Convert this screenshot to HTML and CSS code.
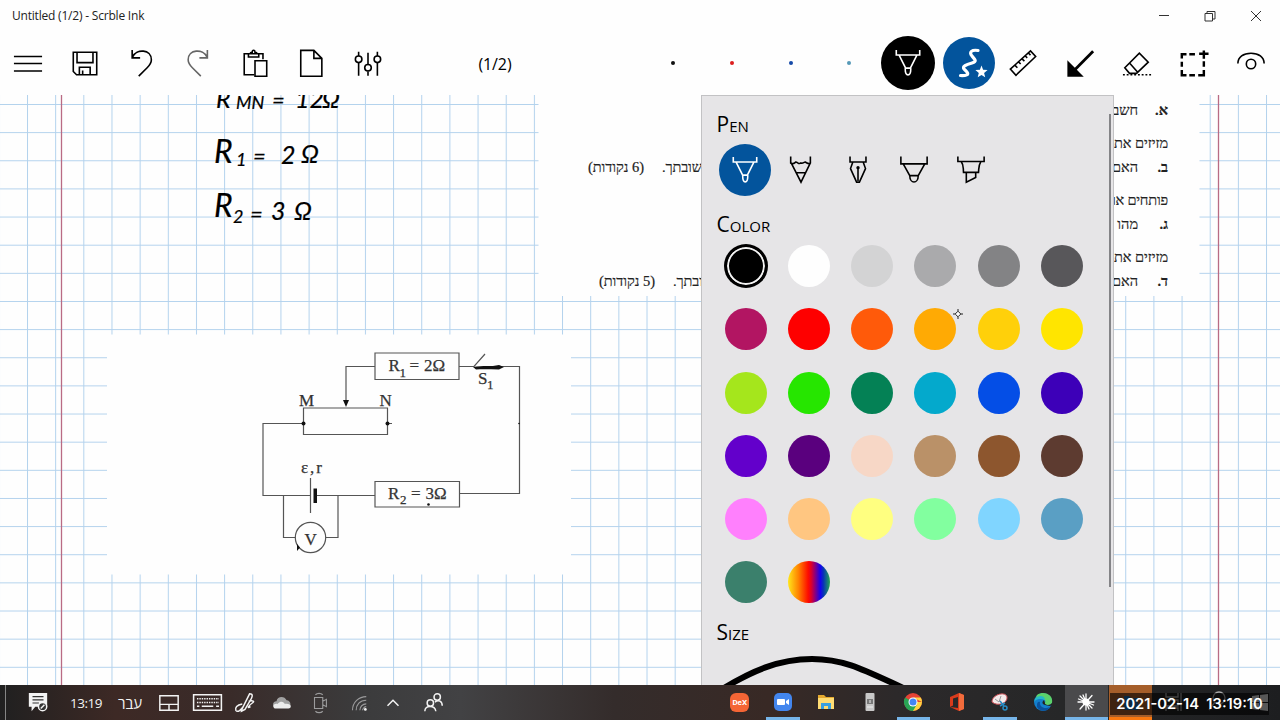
FILE: index.html
```html
<!DOCTYPE html>
<html lang="en">
<head>
<meta charset="utf-8">
<title>Untitled (1/2) - Scrble Ink</title>
<link rel="stylesheet" href="styles.css">
</head>
<body>
<div class="app">
  <header class="titlebar">
    <span class="title">Untitled (1/2) - Scrble Ink</span>
    <div class="winbtns">
      <svg viewBox="0 0 12 12"><path d="M1 5.5h10"/></svg>
      <svg viewBox="0 0 12 12"><path d="M1 3.500h7.500v7.500h-7.500zM3 3.500v-2h8v7.500h-2.500"/></svg>
      <svg viewBox="0 0 12 12"><path d="M1 1l10 10M11 1l-10 10"/></svg>
    </div>
  </header>

  <nav class="toolbar">
    <div class="tools-left">
      <svg viewBox="0 0 32 32"><path d="M1 8h30M1 15.500h30M1 23.500h30"/></svg>
      <svg viewBox="0 0 32 32"><path d="M3.500 3.500h25v24h-21.500l-3.500-3.500zM7.500 4v10.500h17v-10.500M10 27v-7.500h11.500v7.500M13.500 23v4"/></svg>
      <svg viewBox="0 0 32 32"><path d="M5.500 1v8.500h8.500M6 8.500C10-.5 26 0 26 11.500c0 4-2 6-4.500 8.500L12.500 29"/></svg>
      <svg class="muted" viewBox="0 0 32 32"><path d="M26 1v8.500h-8.500M25.500 8.500C21.500-.5 5.500 0 5.500 11.500c0 4 2 6 4.500 8.500L19 29"/></svg>
      <svg viewBox="0 0 32 32"><path d="M15 27.500H4.500v-22.500h20V11M9 5v3.500h11v-3.500M11 5c0-1.500 1-1.500 2-1.500 0-3 3-3 3 0 1 0 2 0 2 1.500M16 12.500h12.500v16.500h-12.500z"/></svg>
      <svg viewBox="0 0 32 32"><path d="M4 1.500h14l8.500 8.500v19h-22.500zM18 1.500v8.500h8.500"/></svg>
      <svg viewBox="0 0 32 32"><path d="M6 3v4.500M6 14.500v14M16 4v12M16 24v4.500M26 3v4.500M26 14.500v14"/><circle cx="6" cy="11" r="3.500"/><circle cx="16" cy="20" r="3.500"/><circle cx="26" cy="11" r="3.500"/></svg>
    </div>
    <span class="pagecount">(1/2)</span>
    <div class="quickpens"><i class="qp black"></i><i class="qp red"></i><i class="qp blue"></i><i class="qp sky"></i></div>
    <div class="active-tools">
      <div class="round ink"><svg viewBox="0 0 32 32"><path d="M3.500 2v5.500h25V2M6.500 7.500l7 14h5l7-14M13 21.500c0 9.500 6 9.500 6 0"/></svg></div>
      <div class="round shape"><svg viewBox="0 0 32 32"><path class="thick" d="M25 3.500C19 2.500 15.500 5 19 9S24 14.500 19 16 8 19.500 11.500 22.500 18 29 7.500 28.500"/><path class="star" d="M28.500 18.500l1.600 4.200 4.500.3-3.500 2.900 1.100 4.400-3.700-2.400-3.800 2.400 1.100-4.400-3.400-2.900 4.500-.3z"/></svg></div>
    </div>
    <div class="tools-right">
      <svg viewBox="0 0 32 32"><path d="M2.500 21.500L24 2l5.500 6L8.500 28zM7.500 17.500l2.500 2.500M11.500 14l2 2M15 10.500l2.500 2.500M18.500 7.500l2 2M22 4.500l2 2"/></svg>
      <svg viewBox="0 0 32 32"><path class="arrow" d="M30 2.500L11 21.500"/><path class="solid" d="M2.500 12v17.500h17.500z"/></svg>
      <svg viewBox="0 0 32 32"><path d="M3 20L18.500 4.500l9.500 9.500-12.500 12H8zM8.500 15.500l8.500 9.500"/><path class="dots" d="M1 27.500h30"/></svg>
      <svg viewBox="0 0 32 32"><path class="heavy" d="M3 10V5.500h5M11 5.500h6M3 13.500v5.500M3 22.500v5.500h5M11 28h6M20.500 28h6v-5.500M26.500 13v6M21.500 5h10M26.500 1.500v9"/></svg>
      <svg viewBox="0 0 32 32"><path d="M2 15.500c0-7 6-11 14-11s14 4 14 11"/><circle cx="16" cy="16" r="5"/></svg>
    </div>
  </nav>

  <main class="workspace">
    <svg class="canvas" viewBox="0 95 1280 590">
      <defs>
        <pattern id="grid" x="27" y="104" width="28.160" height="28.140" patternUnits="userSpaceOnUse"><path class="gridline" d="M.5 0V28.140M0 .5H28.160"/></pattern>
      </defs>
      <rect x="0" y="95" width="1280" height="590" fill="url(#grid)"/>
      <path class="margin" d="M61.500 95v590M1218.500 95v590"/>
      <rect class="paper" x="538.500" y="95" width="661" height="201"/>
      <rect class="paper" x="107" y="334.500" width="464" height="240"/>

      <g class="hand">
        <text x="216" y="107.500">R</text><text class="sub" x="236" y="109">MN</text><text class="eq" x="272" y="107.500">=</text><text x="295" y="107.500">12</text><text x="322" y="107.500">Ω</text>
        <text class="big" x="214" y="163">R</text><text class="sub" x="236" y="166">1</text><text class="eq" x="253" y="164">=</text><text x="281" y="164">2</text><text class="omega" x="301" y="163">Ω</text>
        <text class="big" x="214" y="217">R</text><text class="sub" x="233" y="223">2</text><text class="eq" x="250" y="222">=</text><text x="271" y="220">3</text><text class="omega" x="294" y="220">Ω</text>
      </g>

      <g class="hebrew">
        <text class="b" x="1168" y="114.500">א.</text><text x="1138" y="114.500">חשב</text>
        <text x="1168" y="148" textLength="54">מזיזים את</text>
        <text class="b" x="1168" y="171.500">ב.</text><text x="1138" y="171.500">האם</text>
        <text x="1168" y="205" textLength="56">פותחים או</text>
        <text class="b" x="1168" y="228.500">ג.</text><text x="1138" y="228.500">מהו</text>
        <text x="1168" y="262" textLength="54">מזיזים את</text>
        <text class="b" x="1168" y="286">ד.</text><text x="1138" y="286">האם</text>
        <text x="702" y="171.500" textLength="40">שובתך.</text><text x="644" y="171.500" textLength="56">(6 נקודות)</text>
        <text x="703" y="286" textLength="30">ובתך.</text><text x="655" y="286" textLength="56">(5 נקודות)</text>
      </g>

      <g class="circuit">
        <path d="M375 353h84v26.500h-84zM375 366.500h-29V401M303.500 408h84v26.500h-84zM303 423.500h-40V495.500H310M316 495.500H375M375 481.500h84.500v25.500H375zM459 366.500h15l11-12.500M500 366.500h19.500V493.500H459.500M310.500 478v35M283.500 496v41.500h12M338 496v41.500h-12.500M387 423.500h5"/>
        <circle cx="310.500" cy="537.500" r="15.200"/>
        <path class="fill" d="M343 400h6l-3 7zM313.500 488.500h3.500v14.500h-3.500zM297 544v7l3-3.500zM473 367c10-2 18 0 26-2l5 2-5 2.500c-8 0-15-.5-23 0z"/>
        <circle class="fill" cx="303.500" cy="423.500" r="2"/><circle class="fill" cx="387.500" cy="423.500" r="2"/><circle class="fill" cx="428.500" cy="504.500" r="1.300"/><circle class="fill" cx="519" cy="423.500" r=".8"/>
      </g>
      <g class="labels">
        <text x="388.500" y="371">R</text><text class="small" x="399.500" y="376.500">1</text><text x="409.500" y="371">=</text><text x="424" y="371">2Ω</text>
        <text x="388" y="498.500">R</text><text class="small" x="400" y="504">2</text><text x="411" y="498.500">=</text><text x="425.500" y="498.500">3Ω</text>
        <text x="299" y="405.500">M</text><text x="379.500" y="405.500">N</text><text x="301" y="472.500" textLength="21">ε,r</text>
        <text x="304.500" y="545">V</text><text x="478" y="383.500">S</text><text class="small" x="487" y="388.500">1</text>
      </g>
    </svg>

    <aside class="panel">
      <h2>Pen</h2>
      <div class="nibs">
        <div class="nib selected"><svg viewBox="0 0 32 32"><path d="M3.500 2v5.500h25V2M6.500 7.500l7 14h5l7-14M13.500 21.500c0 9.500 5.500 9.500 5.500 0"/></svg></div>
        <div class="nib"><svg viewBox="0 0 32 32"><path d="M5 1.500v7c3 2 4 0 5.500-1 2 0 3 3 5.500 1 2 1 3-1 4.500-1 2 1 4 3 5.500 1V1.500M5.500 8.500l10.500 20.500L26 8.500M11 19h10"/></svg></div>
        <div class="nib"><svg viewBox="0 0 32 32"><path d="M7.500 1.500v6h17v-6M10.500 7.500L8 14.500 14.500 29h3l6.500-14.500L21.500 7.500M16 13v15"/><circle class="solid" cx="16" cy="13.500" r="1.800"/></svg></div>
        <div class="nib"><svg viewBox="0 0 32 32"><path d="M2 1.500v8h28v-8M4.500 9.500l7 12.500h9l7-12.500M11.500 22c0 9 9 9 9 0"/></svg></div>
        <div class="nib"><svg viewBox="0 0 32 32"><path d="M2 1.500v5.500h28V1.500M5.500 7c3 4 2 6 2.500 11.500h16c.5-5.500 0-7.500 2.500-11.500M11 18.500v10.500l10-5V18.500"/></svg></div>
      </div>
      <h2>Color</h2>
      <div class="swatches">
        <i class="c01"></i><i class="c02"></i><i class="c03"></i><i class="c04"></i><i class="c05"></i><i class="c06"></i>
        <i class="c07"></i><i class="c08"></i><i class="c09"></i><i class="c10"></i><i class="c11"></i><i class="c12"></i>
        <i class="c13"></i><i class="c14"></i><i class="c15"></i><i class="c16"></i><i class="c17"></i><i class="c18"></i>
        <i class="c19"></i><i class="c20"></i><i class="c21"></i><i class="c22"></i><i class="c23"></i><i class="c24"></i>
        <i class="c25"></i><i class="c26"></i><i class="c27"></i><i class="c28"></i><i class="c29"></i><i class="c30"></i>
        <i class="c31"></i><i class="c32"></i>
      </div>
      <h2>Size</h2>
      <svg class="stroke-preview" viewBox="0 0 411 38"><path d="M14 46C50 23 78 12 110 12S160 22 212 46"/></svg>
      <div class="scrollbar"></div>
      <svg class="cursor" viewBox="0 0 10 10"><path d="M5 0v2M5 8v2M0 5h2M8 5h2M5 2.200L7.800 5 5 7.800 2.200 5z"/></svg>
    </aside>
  </main>

  <footer class="taskbar">
    <div class="tray">
      <svg viewBox="0 0 24 24"><path class="solid" d="M2 1h20v15H9l-4 5v-5H2z"/><path class="dark" d="M6 5h12M6 8.500h12M6 12h7"/><circle class="badge" cx="17" cy="16" r="4.500"/><path d="M15 18l4-4"/></svg>
      <span class="clock">13:19</span>
      <span class="lang" dir="rtl">עבר</span>
      <svg viewBox="0 0 24 24"><path d="M2 4h20v16H2zM2 13.500h20M12 13.500V20"/></svg>
      <svg class="wide" viewBox="0 0 32 24"><path d="M1.500 4h29v16h-29z"/><path class="keys" d="M5 8h23M5 12h23"/><path d="M5 16h2.500M10 16h12M25 16h3"/></svg>
      <svg viewBox="0 0 24 24"><path d="M8 20L17 2c4 0 3 3 2 5l-7 12-4 2zM9 13c-6 1-8 4-7 7 2 3 6-1 8-4M16 10c5-1 7 0 4 2s-7 7-2 4"/></svg>
      <svg viewBox="0 0 24 24"><path class="cloud" d="M6 17c-5 0-5-7 0-7 1-6 9-6 11-1 5 0 6 8 1 8z"/><path class="cloud-front" d="M4 18c-3-2-1-6 3-5 4-4 7-2 8 0 8-1 8 5 4 5z"/></svg>
      <svg class="dim" viewBox="0 0 24 24"><path d="M6 6h9v12H6zM15 10l4-2v8l-4-2M7 3c2-2 6-2 8 0M7 21c2 2 6 2 8 0"/></svg>
      <svg class="dim" viewBox="0 0 24 24"><path d="M6 20C6 11 13 5 21 5M10 20c0-6 4-11 11-11M14 20c0-4 3-7 7-7M17 20c0-2 2-4 4-4"/><circle class="solid" cx="20" cy="19" r="1.500"/></svg>
      <svg class="chev" viewBox="0 0 24 24"><path d="M6 15l6-6 6 6"/></svg>
      <svg viewBox="0 0 24 24"><circle cx="15.500" cy="5.500" r="3.500"/><circle cx="8" cy="12" r="3.500"/><path d="M2 21c0-7 11-7 12 0M13 11c4-3 8-1 8 4"/></svg>
    </div>
    <div class="apps">
      <div><b class="dex">DeX</b></div>
      <div class="open"><svg class="zoom" viewBox="0 0 18 18"><rect width="18" height="18" rx="5" fill="#4386ee"/><rect x="3" y="6" width="8" height="6" rx="1" fill="#fff"/><path d="M12 8l3-2v6l-3-2z" fill="#fff"/></svg></div>
      <div><svg class="app-icon" viewBox="0 0 18 18"><path fill="#e5a92f" d="M1 2h6l2 2h8v12H1z"/><path fill="#ffdc73" d="M1 5h16v11H1z"/><path fill="#39a0e0" d="M4 10h10v6h-3v-3H7v3H4z"/></svg></div>
      <div><svg class="app-icon" viewBox="0 0 18 18"><rect x="4.500" y="0" width="9" height="18" rx="1" fill="#c8c8c8"/><rect x="6" y="6" width="6" height="5" fill="#777"/><path stroke="#eee" d="M9 7v3M6 14h6"/></svg></div>
      <div class="open"><svg class="app-icon" viewBox="0 0 18 18"><circle cx="9" cy="9" r="9" fill="#e54335"/><path d="M9 9H18a9 9 0 0 1-9 9z" fill="#ffd23f"/><path d="M18 9A9 9 0 0 0 16.800 4.500H9z" fill="#ffd23f"/><path d="M1.200 4.500A9 9 0 0 0 9 18l3.500-6L9 9z" fill="#28a455"/><circle cx="9" cy="9" r="4.500" fill="#fff"/><circle cx="9" cy="9" r="3.500" fill="#4285f4"/></svg></div>
      <div><svg class="app-icon" viewBox="0 0 18 18"><path fill="#da3b1c" d="M2 4l9-4 5 2v14l-5 2-9-4 8 1V4L5 5.500v7L2 14z"/><path fill="#f26c3c" d="M11 0l5 2v14l-5 2z"/></svg></div>
      <div class="open"><svg class="app-icon" viewBox="0 0 18 18"><path fill="#f4eaea" stroke="#c84a51" d="M1 9c0-8 14-11 15-5S7 14 1 9z"/><path stroke="#999" d="M8 9l2-6M8 9L4 6"/><path fill="none" stroke="#278bc3" stroke-width="1.500" d="M9 8l4 5M14 10l-5 3"/><circle cx="14" cy="15" r="2" fill="none" stroke="#278bc3" stroke-width="1.500"/></svg></div>
      <div><svg class="app-icon" viewBox="0 0 18 18"><circle cx="9" cy="9" r="9" fill="#137fcd"/><path fill="#5bd26b" d="M3 2c7-5 17 0 15 8-2 4-8 2-7 0 2-4-5-6-10-3z"/><path fill="#25b8ca" d="M1 6c4-5 10-3 10 1-5-2-9-1-11 2z"/><path fill="#0b529e" d="M6 9c-1 4 4 8 10 5-4 7-14 3-13-2 0-2 1-4 3-3z"/><path fill="#222" d="M10 7c-3 3-2 5 6 6l2-1v-2c-2 3-8 2-7 0z"/></svg></div>
      <div class="current"><svg class="app-icon" viewBox="0 0 18 18"><path stroke="#fff" stroke-width="1.300" stroke-linecap="round" d="M9 1v16M1 9h16M3 3l12 12M15 2.500L3 16M6 2l6 14M1.500 6l15 6"/><circle cx="9" cy="9" r="3.500" fill="#fff"/></svg></div>
      <div class="alert"><svg class="app-icon" viewBox="0 0 18 18"><path fill="#1e69ac" d="M3 3h5l2 2h7v12H3z"/></svg></div>
      <div><svg class="app-icon gray" viewBox="0 0 18 18"><path d="M1 0v4h12V0M1 7h12v6H1zM1 18v-3h12v3M16 0v18"/></svg></div>
      <div><svg class="app-icon gray" viewBox="0 0 18 18"><circle cx="11" cy="5" r="6"/><path d="M7 9l-6 8"/></svg></div>
      <div><svg class="app-icon" viewBox="0 0 18 18"><path fill="#e5e5e5" d="M1 3l7-1v7H1zM9 2l8-1v8H9zM1 10h7v7l-7-1zM9 10h8v8l-8-1z"/></svg></div>
    </div>
    <div class="timestamp">2021-02-14&nbsp; 13:19:10</div>
  </footer>
</div>
</body>
</html>
```
FILE: styles.css
```css
* { box-sizing: border-box; }
body { margin: 0; font-family: "Open Sans", "Noto Sans", sans-serif; color: #000; }
.app { width: 1280px; height: 720px; display: flex; flex-direction: column; overflow: hidden; background: #fefefe; }
svg { display: block; overflow: visible; }

.titlebar { height: 32px; display: flex; justify-content: space-between; padding-left: 12px; }
.title { font-size: 12px; line-height: 32px; letter-spacing: -.2px; color: #222; }
.winbtns { display: flex; align-items: center; margin-right: 1px; }
.winbtns svg { width: 12px; height: 12px; margin: 0 17px; fill: none; stroke: #333; stroke-width: 1; }

.toolbar { height: 63px; display: flex; align-items: center; }
.toolbar svg, .nib svg { width: 30px; height: 30px; fill: none; stroke: #000; stroke-width: 1.700; }
.tools-left { display: grid; grid-template-columns: repeat(7, 56.700px); justify-items: center; width: 396px; }
.toolbar .muted { stroke: #666; }
.pagecount { width: 198px; text-align: center; font-size: 16px; letter-spacing: -.1px; }
.quickpens { display: grid; grid-template-columns: repeat(4, 58.700px); justify-items: center; width: 235px; margin: -2px 0 0 50px; }
.qp { width: 4px; height: 4px; border-radius: 50%; }
.qp.black { background: #111; }
.qp.red { background: #dc1e1e; }
.qp.blue { background: #164aa8; }
.qp.sky { background: #5599b7; }
.active-tools { display: flex; align-items: center; gap: 8px; margin: -1px 0 0 2px; }
.round { display: grid; place-items: center; border-radius: 50%; width: 54px; height: 54px; background: #000; }
.round.shape { width: 52px; height: 52px; background: #03549c; }
.toolbar .round svg { stroke: #fff; width: 32px; height: 32px; }
.toolbar .round.ink svg { width: 30px; height: 30px; }
.toolbar .round .thick { stroke-width: 3.200; stroke-linecap: round; }
.star { fill: #fff; stroke: none; }
.tools-right { display: grid; grid-template-columns: repeat(5, 56.900px); justify-items: center; }
.solid { fill: currentColor; stroke: none; }
.arrow { stroke-width: 3; }
.heavy { stroke-width: 2.600; }
.dots { stroke-dasharray: 2 2; }

.workspace { height: 590px; position: relative; display: flex; }
.canvas { width: 1280px; height: 590px; overflow: hidden; }
.gridline { stroke: #b3d2ed; stroke-width: 1; fill: none; }
.margin { stroke: #b96b84; stroke-width: 1.300; }
.paper { fill: #fefefe; }
.hand { font: italic 25px Lato, sans-serif; fill: #000; stroke: #000; stroke-width: .2; }
.hand .big { font-size: 32px; }
.hand .sub { font-size: 18px; }
.hand .eq { font-size: 22px; }
.hebrew { font: 14.500px "Liberation Serif", "Noto Sans", serif; fill: #222; stroke: #222; stroke-width: .2; direction: rtl; }
.b { font-weight: bold; }
.circuit { fill: none; stroke: #555; stroke-width: 1.200; }
.fill { fill: #111; stroke: none; }
.labels { font: 17px "Liberation Serif", serif; fill: #333; stroke: #333; stroke-width: .25; }
.small { font-size: 13px; }

.panel { position: absolute; left: 701px; top: 0; width: 413px; height: 590px; overflow: hidden; background: #e6e5e7; border: 1px solid #c2c2c4; border-width: 1px 1px 0; display: flex; flex-direction: column; }
.panel h2 { margin: 0 0 0 14.500px; font-weight: 400; font-size: 21px; line-height: 28px; font-variant: small-caps; letter-spacing: 0; flex: none; }
.panel h2:first-child { margin-top: 14px; }
.nibs { display: flex; gap: 4.500px; margin: 6px 0 12px 16.500px; height: 54px; flex: none; }
.nib { width: 52px; height: 52px; display: grid; place-items: center; border-radius: 50%; }
.nib.selected { background: #03549c; }
.nib.selected svg { stroke: #fff; }
.swatches { display: grid; grid-template-columns: repeat(6, 42px); grid-auto-rows: 42px; gap: 21.300px; margin: 7px 0 15px 22.500px; flex: none; }
.swatches i { border-radius: 50%; }
.swatches .c01 { background: #000; border: 2px solid #000; box-shadow: inset 0 0 0 2px #f4f4f4, 0 0 0 1px #000; }
.c02 { background: #fefefe; } .c03 { background: #d3d3d4; } .c04 { background: #aaaaac; } .c05 { background: #838385; } .c06 { background: #58575a; }
.c07 { background: #b21562; } .c08 { background: #fe0000; } .c09 { background: #ff5a0a; } .c10 { background: #ffaa04; } .c11 { background: #ffd00a; } .c12 { background: #ffe500; }
.c13 { background: #a5e61c; } .c14 { background: #26e600; } .c15 { background: #048155; } .c16 { background: #04a9cc; } .c17 { background: #044ee6; } .c18 { background: #3d00b8; }
.c19 { background: #6300cb; } .c20 { background: #5a007e; } .c21 { background: #f7d7c6; } .c22 { background: #ba9168; } .c23 { background: #8d562e; } .c24 { background: #5d3b30; }
.c25 { background: #ff80fd; } .c26 { background: #ffc681; } .c27 { background: #ffff80; } .c28 { background: #82ff9f; } .c29 { background: #80d5ff; } .c30 { background: #5a9fc4; }
.c31 { background: #3b806c; }
.c32 { background: linear-gradient(90deg, #ffe71c, #ff8200 25%, #fe0c00 48%, #e00028 55%, #1600f0 77%, #0731b8 84%, #24a653); }
.stroke-preview { width: 411px; height: 38px; margin-top: 1px; fill: none; stroke: #000; stroke-width: 6; flex: none; }
.scrollbar { position: absolute; left: 407px; top: 18px; width: 2px; height: 473px; background: #848487; }
.cursor { position: absolute; left: 250.500px; top: 213px; width: 10px; height: 10px; fill: #fff; stroke: #222; stroke-width: 1; }

.taskbar { position: relative; height: 35px; display: flex; justify-content: space-between; background: linear-gradient(90deg, #202020, #3d2925 9%, #392b29 18%, #3b3b3c 28%, #424244 36%, #342c2b 48%, #382925 60%, #2c292a 70%, #262728 83%, #1d1e20); color: #f3f3f3; }
.tray { display: grid; grid-template-columns: 44px 52px 36px 42px 34px 42px 32px 44px 32px 38px 44px; place-items: center; align-content: center; border-left: 1px solid #858585; margin-left: 5px; padding-left: 10px; }
.tray svg { width: 22px; height: 22px; fill: none; stroke: #f3f3f3; stroke-width: 1.600; }
.tray .wide { width: 31px; height: 23px; }
.tray .dim { stroke: #9b9b9c; stroke-width: 1.200; }
.tray .dark { stroke: #333; stroke-width: 1.300; }
.badge { fill: #333; }
.keys { stroke-dasharray: 1.500 1; }
.tray .cloud { fill: #a1a1a1; stroke: none; }
.tray .cloud-front { fill: #ececec; stroke: none; }
.clock { font-size: 13.500px; letter-spacing: -.5px; }
.lang { font: 15px "Open Sans", "Liberation Sans", sans-serif; }
.apps { display: grid; grid-template-columns: repeat(13, 43.400px); width: 562px; flex: none; }
.apps > div { display: grid; place-items: center; border-bottom: 3px solid transparent; padding-top: 2px; }
.apps .open { margin: 0 5px; border-color: #76b5e9; }
.apps .current { background: #4a4a4c; border-color: #76b5e9; margin-right: 1px; }
.apps .alert { background: #a55e2a; border-color: #f97810; }
.apps svg { width: 18px; height: 18px; }
.dex { width: 19px; height: 19px; border-radius: 6px; background: #f46535; font: bold 8px/19px Roboto, sans-serif; text-align: center; color: #fff; }
.apps .gray { fill: none; stroke: #aaa; stroke-width: 1.300; }
.timestamp { position: absolute; left: 1110px; top: 8px; width: 159px; height: 22px; background: rgba(0,0,0,.62); color: #fff; font: 600 14.700px/22px Inter, sans-serif; text-align: center; white-space: nowrap; }
```
